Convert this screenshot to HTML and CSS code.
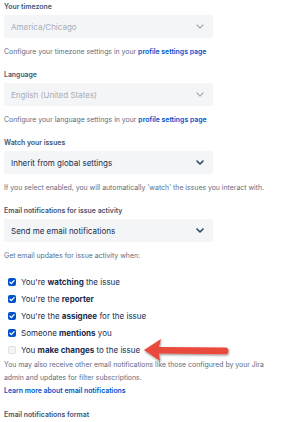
FILE: index.html
```html
<!DOCTYPE html>
<html lang="en">
<head>
<meta charset="utf-8">
<title>Preferences</title>
<link rel="stylesheet" href="styles.css">
</head>
<body>
<div class="form">
  <div class="field">
    <div class="label">Your timezone</div>
    <div class="select disabled">
      <span>America/Chicago</span>
      <svg class="chev" viewBox="0 0 8 5" width="8" height="5"><path d="M1 1 L4 4 L7 1" fill="none" stroke="currentColor" stroke-width="1.2" stroke-linecap="round" stroke-linejoin="round"/></svg>
    </div>
    <p class="help">Configure your timezone settings in your <a href="#">profile settings page</a></p>
  </div>
  <div class="field">
    <div class="label">Language</div>
    <div class="select disabled">
      <span>English (United States)</span>
      <svg class="chev" viewBox="0 0 8 5" width="8" height="5"><path d="M1 1 L4 4 L7 1" fill="none" stroke="currentColor" stroke-width="1.2" stroke-linecap="round" stroke-linejoin="round"/></svg>
    </div>
    <p class="help">Configure your language settings in your <a href="#">profile settings page</a></p>
  </div>
  <div class="field">
    <div class="label">Watch your issues</div>
    <div class="select">
      <span>Inherit from global settings</span>
      <svg class="chev" viewBox="0 0 8 5" width="8" height="5"><path d="M1 1 L4 4 L7 1" fill="none" stroke="currentColor" stroke-width="1.6" stroke-linecap="round" stroke-linejoin="round"/></svg>
    </div>
    <p class="help">If you select enabled, you will automatically 'watch' the issues you interact with.</p>
  </div>
  <div class="field">
    <div class="label">Email notifications for issue activity</div>
    <div class="select">
      <span>Send me email notifications</span>
      <svg class="chev" viewBox="0 0 8 5" width="8" height="5"><path d="M1 1 L4 4 L7 1" fill="none" stroke="currentColor" stroke-width="1.6" stroke-linecap="round" stroke-linejoin="round"/></svg>
    </div>
    <p class="help">Get email updates for issue activity when:</p>
    <ul class="checks">
      <li class="row"><span class="box on"><svg viewBox="0 0 8 8" width="8" height="8"><path d="M2 4.2 L3.4 5.6 L6 2.6" fill="none" stroke="#fff" stroke-width="1.3" stroke-linecap="round" stroke-linejoin="round"/></svg></span><span>You're <b>watching</b> the issue</span></li>
      <li class="row"><span class="box on"><svg viewBox="0 0 8 8" width="8" height="8"><path d="M2 4.2 L3.4 5.6 L6 2.6" fill="none" stroke="#fff" stroke-width="1.3" stroke-linecap="round" stroke-linejoin="round"/></svg></span><span>You're the <b>reporter</b></span></li>
      <li class="row"><span class="box on"><svg viewBox="0 0 8 8" width="8" height="8"><path d="M2 4.2 L3.4 5.6 L6 2.6" fill="none" stroke="#fff" stroke-width="1.3" stroke-linecap="round" stroke-linejoin="round"/></svg></span><span>You're the <b>assignee</b> for the issue</span></li>
      <li class="row"><span class="box on"><svg viewBox="0 0 8 8" width="8" height="8"><path d="M2 4.2 L3.4 5.6 L6 2.6" fill="none" stroke="#fff" stroke-width="1.3" stroke-linecap="round" stroke-linejoin="round"/></svg></span><span>Someone <b>mentions</b> you</span></li>
      <li class="row last"><span class="box off"></span><span>You <b>make changes</b> to the issue</span>
        <svg class="arrow" viewBox="0 0 95 30" width="95" height="30">
          <defs>
            <filter id="sh" x="-10%" y="-30%" width="130%" height="170%">
              <feDropShadow dx="0.6" dy="1.2" stdDeviation="0.8" flood-color="#000" flood-opacity="0.45"/>
            </filter>
          </defs>
          <g filter="url(#sh)" fill="#ea4a3c">
            <path d="M4 15 L21 4 L19 12 L85 12.5 A3.4 3.4 0 0 1 85 19.3 L19 18.6 L20 26 Z"/>
          </g>
        </svg>
      </li>
    </ul>
    <p class="help multi">You may also receive other email notifications like those configured by your Jira admin and updates for filter subscriptions.<br><a href="#">Learn more about email notifications</a></p>
  </div>
  <div class="label final">Email notifications format</div>
</div>
</body>
</html>
```

FILE: styles.css
```css
* { box-sizing: border-box; }
html, body { margin: 0; padding: 0; background: #fff; }
body {
  font-family: Inter, "Liberation Sans", sans-serif;
  color: #172b4d;
  width: 290px;
  height: 422px;
  overflow: hidden;
}
.form { padding: 2px 4px 0 4px; }
.field { margin-bottom: 13px; }
.label {
  font-size: 6.9px;
  line-height: 10px;
  font-weight: 600;
  color: #44546f;
  margin-bottom: 3px;
}
.select {
  width: 209px;
  height: 23px;
  background: #f4f5f7;
  border-radius: 2px;
  display: flex;
  align-items: center;
  justify-content: space-between;
  padding: 0 9px 0 7px;
  font-size: 8px;
  color: #172b4d;
}
.select.disabled { color: #a5adba; }
.select .chev { color: #344563; }
.select.disabled .chev { color: #a5adba; }
.help {
  margin: 9px 0 0 0;
  font-size: 6.9px;
  line-height: 10px;
  color: #5e6c84;
}
.help a {
  color: #0052cc;
  font-weight: 600;
  text-decoration: none;
}
.checks {
  list-style: none;
  margin: 12px 0 0 0;
  padding: 0;
}
.row {
  height: 17px;
  display: flex;
  align-items: center;
  gap: 5px;
  padding-left: 4px;
  font-size: 8px;
  color: #172b4d;
  position: relative;
}
.row b { font-weight: 700; }
.box {
  width: 8px;
  height: 8px;
  border-radius: 2px;
  flex: none;
  display: flex;
}
.box.on { background: #0052cc; }
.box.off { background: #f4f5f7; border: 1px solid #dfe1e6; }
.arrow {
  position: absolute;
  left: 136px;
  top: -6px;
}
.help.multi {
  margin-top: 0;
  line-height: 13px;
  width: 268px;
}
.label.final { margin-top: 13px; }
```
